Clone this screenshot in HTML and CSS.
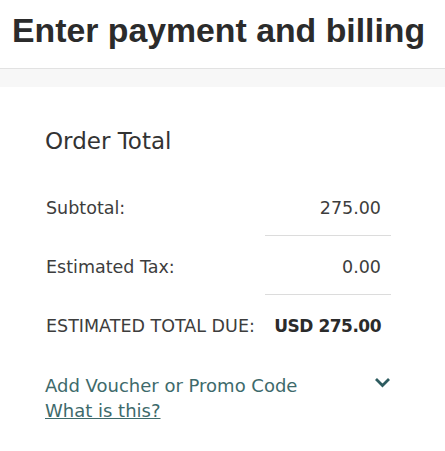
FILE: index.html
```html
<!DOCTYPE html>
<html lang="en">
<head>
    <meta charset="UTF-8">
    <meta name="viewport" content="width=device-width, initial-scale=1.0">
    <title>Enter payment and billing</title>
    <link rel="stylesheet" href="styles.css">
</head>
<body>
    <header class="page-head">
        <h1>Enter payment and billing</h1>
    </header>
    <div class="band"></div>

    <section class="order">
        <h2>Order Total</h2>
        <div class="row">
            <span>Subtotal:</span>
            <span class="amount">275.00</span>
        </div>
        <div class="row">
            <span>Estimated Tax:</span>
            <span class="amount">0.00</span>
        </div>
        <div class="row total">
            <span>ESTIMATED TOTAL DUE:</span>
            <span class="amount">USD 275.00</span>
        </div>

        <div class="promo">
            <div class="promo-text">
                <a class="promo-toggle" href="#">Add Voucher or Promo Code</a>
                <a class="help" href="#">What is this?</a>
            </div>
            <svg class="chevron" width="17" height="11" viewBox="0 0 17 11">
                <path d="M2 2 L8.5 8.5 L15 2" fill="none" stroke="#2d5b5f" stroke-width="2.8"/>
            </svg>
        </div>
    </section>
</body>
</html>
```

FILE: styles.css
```css
body, html {
    margin: 0;
    padding: 0;
    background-color: #fff;
    color: #3d3d3d;
    font-family: 'DejaVu Sans', sans-serif;
}
.page-head {
    padding: 11px 12px 0;
    height: 57px;
    border-bottom: 1px solid #e2e2e2;
}
h1 {
    margin: 0;
    font-family: 'Liberation Sans', Arial, sans-serif;
    font-size: 33.8px;
    font-weight: bold;
    color: #2b2b2b;
    line-height: 38px;
}
.band {
    height: 18px;
    background-color: #f7f7f7;
}
.order {
    padding: 39px 54px 0 45px;
}
h2 {
    margin: 0 0 21px;
    font-size: 23px;
    font-weight: normal;
    line-height: 30px;
    color: #333;
}
.row {
    display: flex;
    justify-content: space-between;
    align-items: center;
    padding: 21px 10px 17px 1px;
    line-height: 21px;
    font-size: 17.5px;
    position: relative;
}
.row::after {
    content: "";
    position: absolute;
    right: 0;
    bottom: 0;
    width: 126px;
    border-bottom: 1px solid #dcdcdc;
}
.row.total::after {
    display: none;
}
.total .amount {
    font-size: 17px;
    font-weight: bold;
    letter-spacing: -0.5px;
    color: #2b2b2b;
}
.promo {
    display: flex;
    justify-content: space-between;
    align-items: flex-start;
    margin-top: 19px;
}
.promo-text {
    display: flex;
    flex-direction: column;
    font-size: 18px;
    line-height: 25px;
}
.promo-toggle {
    color: #3e6a6b;
    text-decoration: none;
}
.help {
    color: #3e6a6b;
}
.chevron {
    margin-top: 4px;
}
```
